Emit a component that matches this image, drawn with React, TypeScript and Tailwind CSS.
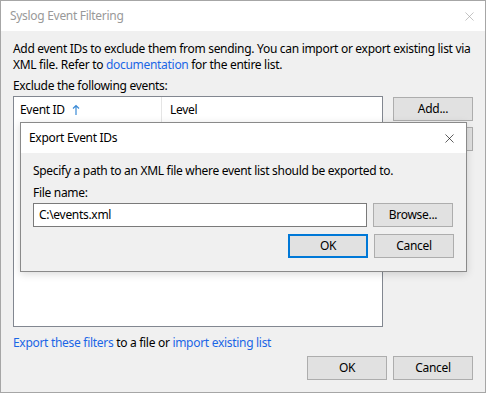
import { X } from "lucide-react";

const Btn = ({ label, focused }: { label: string; focused?: boolean }) => (
  <button
    className={
      focused
        ? "w-[80px] h-[24px] bg-[#e1e1e1] border-2 border-[#0078d7] text-[12px] text-black"
        : "w-[80px] h-[24px] bg-[#e1e1e1] border border-[#adadad] text-[12px] text-black"
    }
  >
    {label}
  </button>
);

export default function App() {
  return (
    <div
      className="relative w-[486px] h-[393px] border border-[#a6a6a6] bg-[#f0f0f0] text-[12px] leading-[16px] tracking-[-0.3px] text-black flex flex-col"
      style={{ fontFamily: '"Noto Sans", "Liberation Sans", sans-serif' }}
    >
      <div className="h-[30px] bg-white flex items-center justify-between pl-[9px] pr-[8px] shrink-0">
        <span className="text-[#999999]">Syslog Event Filtering</span>
        <X size={15} strokeWidth={1} className="text-[#a0a0a0]" />
      </div>

      <div className="flex-1 flex flex-col px-[12px] pt-[10px]">
        <p className="whitespace-nowrap">
          Add event IDs to exclude them from sending. You can import or export existing list via
          <br />
          XML file. Refer to <span className="text-[#1a66e6]">documentation</span> for the entire list.
        </p>
        <div className="mt-[5px]">Exclude the following events:</div>

        <div className="mt-[2px] flex gap-[10px]">
          <div className="w-[371px] h-[231px] bg-white border border-[#828790]">
            <div className="flex h-[25px] items-center">
              <div className="w-[148px] h-full flex items-center pl-[6px] border-r border-[#e5e5e5]">
                Event ID
                <svg width="8" height="12" viewBox="0 0 8 12" className="ml-[7px]">
                  <path d="M4 11V1.5M1 4.5L4 1.5L7 4.5" stroke="#3a8ad6" strokeWidth="1.2" fill="none" />
                </svg>
              </div>
              <div className="pl-[8px]">Level</div>
            </div>
          </div>
          <div className="flex flex-col gap-[6px] pt-[1px]">
            <Btn label="Add..." />
            <Btn label="Remove" />
          </div>
        </div>

        <div className="mt-[8px]">
          <span className="text-[#1a66e6]">Export these filters</span> to a file or{" "}
          <span className="text-[#1a66e6]">import existing list</span>
        </div>

        <div className="mt-[5px] flex justify-end gap-[6px]">
          <Btn label="OK" />
          <Btn label="Cancel" />
        </div>
      </div>

      <div className="absolute left-[19px] top-[121px] w-[447px] h-[150px] border border-[#8a8a8a] bg-[#f0f0f0] flex flex-col shadow-[0_2px_8px_rgba(0,0,0,0.15)]">
        <div className="h-[30px] bg-white flex items-center justify-between pl-[8px] pr-[9px] shrink-0">
          <span>Export Event IDs</span>
          <X size={15} strokeWidth={1} className="text-black" />
        </div>
        <div className="px-[12px] pt-[10px] flex flex-col">
          <div>Specify a path to an XML file where event list should be exported to.</div>
          <div className="mt-[6px]">File name:</div>
          <div className="mt-[2px] flex gap-[6px]">
            <div className="w-[334px] h-[24px] bg-white border border-[#7a7a7a] flex items-center pl-[5px]">
              C:\events.xml
            </div>
            <Btn label="Browse..." />
          </div>
          <div className="mt-[7px] flex justify-end gap-[6px]">
            <Btn label="OK" focused />
            <Btn label="Cancel" />
          </div>
        </div>
      </div>
    </div>
  );
}
